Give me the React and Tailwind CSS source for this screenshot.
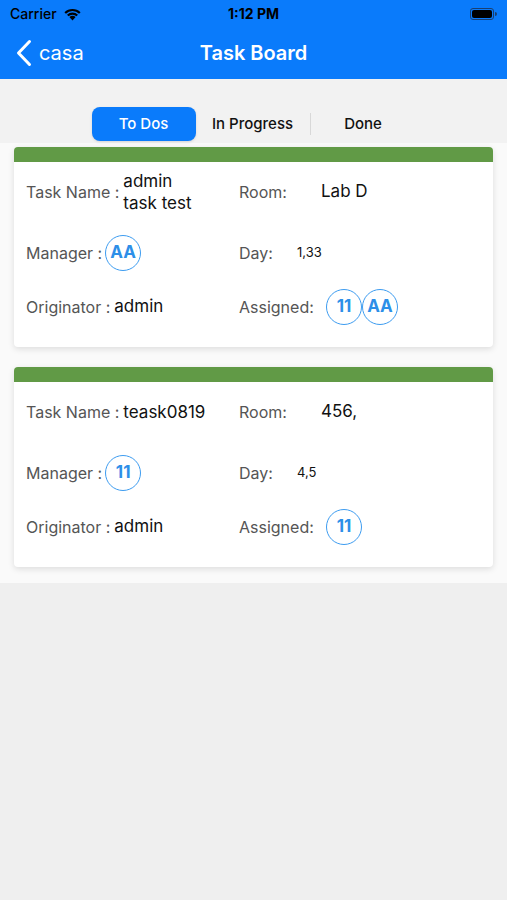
const tasks = [
  {
    id: 1,
    name: ["admin", "task test"],
    room: "Lab D",
    manager: "AA",
    day: "1,33",
    originator: "admin",
    assigned: ["11", "AA"],
  },
  {
    id: 2,
    name: ["teask0819"],
    room: "456,",
    manager: "11",
    day: "4,5",
    originator: "admin",
    assigned: ["11"],
  },
];

function Avatar({ text }) {
  return (
    <div className="w-9 h-9 rounded-full border-[1.5px] border-[#3d9cf0] flex items-center justify-center text-[#2d8fe8] font-bold text-[17px] bg-white">
      {text}
    </div>
  );
}

function TaskCard({ task }) {
  return (
    <div className="mx-[14px] bg-white rounded-sm shadow-[0_2px_6px_rgba(0,0,0,0.12)] overflow-hidden">
      <div className="h-[15px] bg-[#619a46]" />
      <div className="pl-3 pr-3 pb-[13px]">
        <div className="flex h-[60px] items-center">
          <div className="w-[213px] flex items-center">
            <span className="text-[#555] text-[16px] mr-[4px]">Task Name :</span>
            <div className="text-[#111] text-[17px] leading-[22px]">
              {task.name.map((n) => (
                <div key={n}>{n}</div>
              ))}
            </div>
          </div>
          <span className="w-[82px] text-[#555] text-[16px]">Room:</span>
          <span className="text-[#111] text-[17px]">{task.room}</span>
        </div>
        <div className="flex h-[54px] items-center mt-[4px]">
          <div className="w-[213px] flex items-center">
            <span className="text-[#555] text-[16px] mr-[3px]">Manager :</span>
            <Avatar text={task.manager} />
          </div>
          <span className="w-[58px] text-[#555] text-[16px]">Day:</span>
          <span className="text-[#111] text-[13px]">{task.day}</span>
        </div>
        <div className="flex h-[54px] items-center">
          <div className="w-[213px] flex items-center">
            <span className="text-[#555] text-[16px] mr-[4px]">Originator :</span>
            <span className="text-[#111] text-[17px]">{task.originator}</span>
          </div>
          <span className="w-[87px] text-[#555] text-[16px]">Assigned:</span>
          <div className="flex">
            {task.assigned.map((a) => (
              <Avatar key={a} text={a} />
            ))}
          </div>
        </div>
      </div>
    </div>
  );
}

export default function App() {
  return (
    <div className="w-[507px] h-[900px] bg-[#efefef] font-['Inter',sans-serif] overflow-hidden">
      <div className="bg-[#0a7bfb] text-white">
        <div className="h-[27px] flex items-center justify-between px-[10px] relative">
          <div className="flex items-center gap-[6px] text-[14px] font-medium text-black">
            <span>Carrier</span>
            <svg width="19" height="14" viewBox="0 0 17 13">
              <path d="M8.5 12.5 L5.6 9.4 A4.2 4.2 0 0 1 11.4 9.4 Z" fill="#000" />
              <path d="M3.4 7.2 A7.3 7.3 0 0 1 13.6 7.2 L12.2 8.6 A5.3 5.3 0 0 0 4.8 8.6 Z" fill="#000" />
              <path d="M1 4.8 A10.8 10.8 0 0 1 16 4.8 L14.6 6.2 A8.8 8.8 0 0 0 2.4 6.2 Z" fill="#000" />
            </svg>
          </div>
          <span className="absolute left-1/2 -translate-x-1/2 text-[14px] font-bold text-black">1:12 PM</span>
          <div className="flex items-center">
            <div className="w-[24px] h-[12px] rounded-[3px] border border-[#1a3f70] p-[1px]">
              <div className="w-full h-full bg-black rounded-[2px]" />
            </div>
            <div className="w-[2px] h-[4px] bg-[#1a3f70] rounded-r-sm ml-[1px]" />
          </div>
        </div>
        <div className="h-[52px] flex items-center relative">
          <div className="flex items-center pl-[15px]">
            <svg width="18" height="28" viewBox="0 0 18 28" fill="none">
              <path d="M14.5 2.5 L3.5 14 L14.5 25.5" stroke="white" strokeWidth="3" strokeLinecap="round" strokeLinejoin="round" />
            </svg>
            <span className="text-[20px] ml-[6px]">casa</span>
          </div>
          <span className="absolute left-1/2 -translate-x-1/2 text-[20px] font-semibold">Task Board</span>
        </div>
      </div>
      <div className="bg-[#f2f2f2] h-[64px] flex items-end justify-center pb-[2px]">
        <div className="flex items-center w-[324px] h-[34px] text-[15px] font-medium text-[#111]">
          <button className="w-[104px] h-[34px] rounded-lg bg-[#0a7bfb] text-white shadow-sm">To Dos</button>
          <div className="w-[114px] text-center">In Progress</div>
          <div className="w-px h-[22px] bg-[#d8d8d8]" />
          <div className="flex-1 text-center">Done</div>
        </div>
      </div>
      <div className="bg-[#fafafa] pt-[4px] pb-[16px] flex flex-col gap-[20px]">
        {tasks.map((t) => (
          <TaskCard key={t.id} task={t} />
        ))}
      </div>
    </div>
  );
}
